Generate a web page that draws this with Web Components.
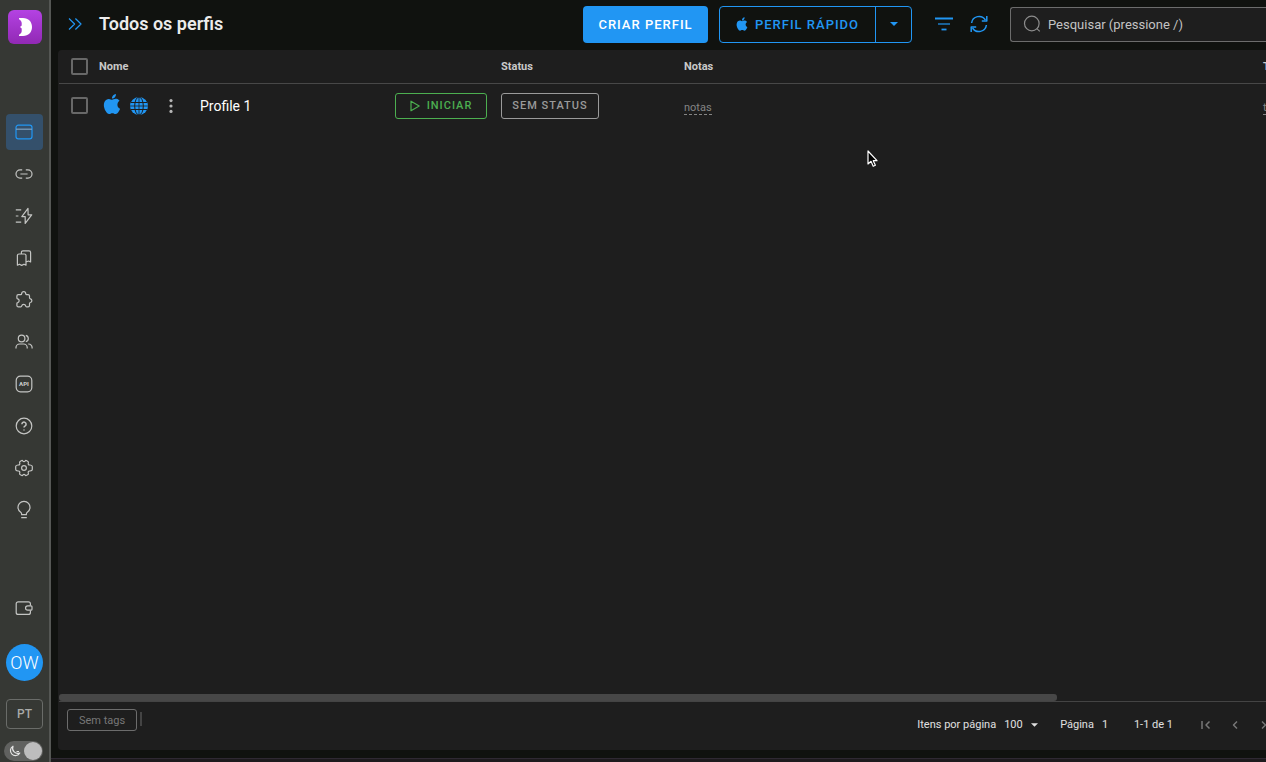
<!DOCTYPE html>
<html lang="pt">
<head>
<meta charset="utf-8">
<title>Todos os perfis</title>
<style>
  html, body { margin: 0; height: 100%; }
  body { font-family: Roboto, "Liberation Sans", sans-serif; font-size: 14px; color: #ececec; background: #10120f; overflow: hidden; }
</style>
</head>
<body>
<app-shell>
  <side-bar slot="side"></side-bar>
  <top-bar slot="top" heading="Todos os perfis"></top-bar>
  <profile-table></profile-table>
  <table-footer slot="footer"></table-footer>
</app-shell>
<mouse-pointer></mouse-pointer>

<script>
const APPLE = '<path fill="currentColor" stroke="none" d="M18.71,19.5C17.88,20.74 17,21.95 15.66,21.97C14.32,22 13.89,21.18 12.37,21.18C10.84,21.18 10.37,21.95 9.1,22C7.79,22.05 6.8,20.68 5.96,19.47C4.25,17 2.94,12.45 4.7,9.39C5.57,7.87 7.13,6.91 8.82,6.88C10.1,6.86 11.32,7.75 12.11,7.75C12.89,7.75 14.37,6.68 15.92,6.84C16.57,6.87 18.39,7.1 19.56,8.82C19.47,8.88 17.39,10.1 17.41,12.63C17.44,15.65 20.06,16.66 20.09,16.67C20.06,16.74 19.67,18.11 18.71,19.5M13,3.5C13.73,2.67 14.94,2.04 15.94,2C16.07,3.17 15.6,4.35 14.9,5.19C14.21,6.04 13.07,6.7 11.95,6.61C11.8,5.46 12.36,4.26 13,3.5Z"/>';

/* name: [viewBox, markup] */
const ICONS = {
  window: ['0 0 18 18', '<rect x="1" y="2.2" width="16" height="13.6" rx="2.4"/><path d="M1 6.2h16" stroke="#7fa3c4"/>'],
  link: ['0 0 18 18', '<path d="M7.2 4.9H5.1a4.1 4.1 0 0 0 0 8.2h2.1M10.8 4.9h2.1a4.1 4.1 0 0 1 0 8.2h-2.1M5.4 9h7.2"/>'],
  bolt: ['0 0 18 18', '<path d="M.8 2.8h5.4M.8 9h2.6M.8 15.2h5.4M13 1.4 6.8 9.6h3.4v6.8l6.5-8.6h-3.6z"/>'],
  bookmarks: ['0 0 18 18', '<path d="M2.4 6.6c0-1 .6-1.6 1.6-1.6h5.4c1 0 1.600.6 1.600 1.600v9.600l-2-1-2.300 1.200-2.300-1.200-2 1zM6.400 5V3.400c0-1 .6-1.600 1.600-1.600h6c1 0 1.600.6 1.600 1.600v9.600l-2-1-2.600 1"/>'],
  puzzle: ['0 0 18 18', '<path d="M4.200 3.700h1.600c.7 0 .8-.4.9-1a2 2 0 0 1 4 0c.1.600.2 1 .9 1h1.500c.9 0 1.400.5 1.400 1.400v1.700c0 .7.300.9.900 1a1.900 1.900 0 0 1 0 3.700c-.6.100-.9.300-.9 1v1.900c0 .9-.5 1.400-1.400 1.400h-1.500c-.7 0-.8-.3-.9-.8a2.050 2.050 0 0 0-4 0c-.1.500-.2.800-.9.800H3.300c-.9 0-1.400-.5-1.400-1.400v-1.800c0-.7.300-.9.800-1a1.900 1.900 0 0 0 0-3.700c-.5-.1-.8-.3-.8-1V5.100c0-.9.500-1.400 1.400-1.400z"/>'],
  people: ['0 0 18 18', '<circle cx="6.600" cy="5.500" r="3.300"/><path d="M1 15.400v-.8a3.600 3.600 0 0 1 3.600-3.600h4a3.600 3.600 0 0 1 3.600 3.600v.8M10.800 2.300a3.300 3.300 0 0 1 0 6.400M13.200 11h.4a3.500 3.500 0 0 1 3.500 3.600v.8"/>'],
  api: ['0 0 18 18', '<rect x="1.200" y="1.200" width="15.600" height="15.600" rx="4.200"/><text x="9" y="11" text-anchor="middle" font-size="6" font-weight="900" fill="currentColor" stroke="none">API</text>'],
  help: ['0 0 18 18', '<circle cx="9" cy="9" r="7.800"/><path d="M6.900 7.200a2.100 2.100 0 1 1 3.300 1.700c-.8.500-1.200.9-1.200 1.700M9 12.400v1" stroke-width="1.500"/>'],
  gear: ['0 0 18 18', '<circle cx="9" cy="9" r="2.400"/><path d="M6.300 1.700c.7-.4 1.300-.2 1.700.4.500.7 1.500.7 2 0 .4-.6 1-.8 1.700-.4l1.200.7c.6.400.7 1 .4 1.700-.4.900.2 1.800 1.100 1.900H15c1 .1 2.300.6 2.300 1.500v3c0 .9-1.300 1.400-2.300 1.500h-.6c-.9.100-1.500 1-1.100 1.900.3.700.2 1.300-.4 1.700l-1.200.7c-.7.400-1.300.2-1.700-.4-.5-.7-1.500-.7-2 0-.4.600-1 .8-1.700.4l-1.200-.7c-.6-.4-.7-1-.4-1.700.4-.9-.2-1.800-1.100-1.900H3c-1-.1-2.300-.6-2.300-1.500v-3C.7 6.600 2 6.100 3 6h.6c.9-.1 1.500-1 1.100-1.900-.3-.7-.2-1.300.4-1.700z"/>'],
  bulb: ['0 0 18 18', '<path d="M6.600 13.700v-.9c0-.7-.3-1-.9-1.500a6 6 0 1 1 6.600 0c-.6.500-.9.800-.9 1.500v.9zM6.200 16.600h5.600"/>'],
  wallet: ['0 0 18 18', '<path d="M15.400 6.500V4.800a2 2 0 0 0-2-2H3.200a2 2 0 0 0-2 2v8.600a2 2 0 0 0 2 2h10.200a2 2 0 0 0 2-2v-2"/><path d="M12.700 6.800H16c.6 0 1 .3 1 .9v2.500c0 .6-.4.900-1 .9h-3.300a2.150 2.150 0 0 1 0-4.300z"/>'],
  apple: ['3 2 18 20', APPLE],
  chevrons: ['0 0 14 14', '<path d="M1 1.500 6.600 7 1 12.500M7.400 1.500 13 7l-5.600 5.500"/>'],
  filter: ['0 0 18 16', '<path d="M0 2.500h18" stroke-width="2"/><path d="M3 8h12" stroke-width="1.200"/><path d="M6.500 13.500h5" stroke-width="1.800"/>'],
  refresh: ['0 0 18 18', '<path d="M1.600 8A7.500 7.500 0 0 1 15.400 5M16.400 10A7.500 7.500 0 0 1 2.600 13" stroke-width="1.500"/><path d="M16.800 1v5h-5M1.200 17v-5h5" stroke-width="1.500"/>'],
  search: ['0 0 18 18', '<circle cx="8.800" cy="8.500" r="7.300"/><path d="m13.800 13.600 3 2.800"/>'],
  caret: ['0 0 8 4', '<path d="M0 0h8L4 4z" fill="currentColor" stroke="none"/>'],
  globe: ['0 0 18 18', '<circle cx="9" cy="9" r="9" fill="currentColor" stroke="none"/><g stroke="#1e1e1e" stroke-width="1"><ellipse cx="9" cy="9" rx="4.300" ry="9"/><path d="M1 5.500h16M1 12.500h16"/></g><path d="M9 0v18M0 9h18" stroke="#1e1e1e" stroke-width=".8"/>'],
  dots: ['0 0 4 14', '<g fill="currentColor" stroke="none"><circle cx="2" cy="1.600" r="1.600"/><circle cx="2" cy="7" r="1.600"/><circle cx="2" cy="12.400" r="1.600"/></g>'],
  play: ['0 0 10 12', '<path d="M1 1.200 9.200 6 1 10.800z"/>'],
  first: ['0 0 10 10', '<path d="M1 1v8M8.500 1.500 5 5l3.500 3.500" stroke-width="1.500"/>'],
  prev: ['0 0 6 10', '<path d="M5 1.500 1.500 5 5 8.500" stroke-width="1.500"/>'],
  next: ['0 0 6 10', '<path d="M1 1.500 4.500 5 1 8.500" stroke-width="1.500"/>'],
  moon: ['0 0 12 12', '<path d="M4 1.200A5 5 0 1 0 10.800 8 5.200 5.200 0 0 1 4 1.200zM7.500 6.500h2.500"/>']
};

function define(name, html, setup) {
  const template = document.createElement('template');
  template.innerHTML = html;
  customElements.define(name, class extends HTMLElement {
    connectedCallback() {
      if (this.shadowRoot) return;
      const root = this.attachShadow({ mode: 'open' });
      root.append(template.content.cloneNode(true));
      if (setup) setup(this, root);
    }
  });
}

define('ui-icon', `<style>
  :host { display: inline-flex; flex: none; width: 18px; height: 18px; }
  svg { width: 100%; height: 100%; fill: none; stroke: currentColor; stroke-width: 1.2; stroke-linejoin: round; overflow: visible; }
</style>`, (host, root) => {
  const [box, body] = ICONS[host.getAttribute('name')];
  root.innerHTML += `<svg viewBox="${box}" aria-hidden="true">${body}</svg>`;
});

define('app-shell', `<style>
  :host { display: flex; height: 100vh; }
  .main { flex: 1; min-width: 0; display: flex; flex-direction: column; overflow: hidden; }
  .panel { flex: 1; min-height: 0; display: flex; flex-direction: column; margin-left: 7px; background: #1e1e1e; border-radius: 4px 0 0 4px; }
  .body { flex: 1; min-height: 0; overflow: hidden; margin-left: 1px; }
  .edge { height: 3px; margin-top: 8px; background: #1d1a1d; border-top: 1px solid #2f2933; }
</style>
<slot name="side"></slot>
<div class="main">
  <slot name="top"></slot>
  <div class="panel"><div class="body"><slot></slot></div><slot name="footer"></slot></div>
  <div class="edge"></div>
</div>`);

define('side-item', `<style>
  :host { display: block; }
  a { display: flex; align-items: center; justify-content: center; box-sizing: border-box; height: 36px; padding-right: 1px; border-radius: 4px; color: #c4c5c3; }
  :host([active]) a { background: #34506b; color: #2196f3; }
</style><a href="#"></a>`, (host, root) => {
  const a = root.querySelector('a');
  a.setAttribute('aria-label', host.getAttribute('label'));
  a.innerHTML = `<ui-icon name="${host.getAttribute('icon')}"></ui-icon>`;
});

define('side-bar', `<style>
  :host { display: flex; flex-direction: column; flex: none; width: 51px; box-sizing: border-box; padding: 10px 6px 1px; background: #363834; border-right: 2px solid #555754; }
  .logo { display: block; width: 34px; height: 34px; margin: 0 auto 70px 2px; }
  nav { display: flex; flex-direction: column; gap: 6px; }
  .bottom { margin-top: auto; display: flex; flex-direction: column; }
  .avatar { height: 37px; margin-top: 18px; padding: 0; border: 0; border-radius: 50%; background: #2196f3; color: #fff; font: 300 18px Roboto, sans-serif; }
  .lang { height: 30px; margin-top: 18px; padding: 0; border: 1px solid #6a6c69; border-radius: 4px; background: none; color: #a9aaa8; font: 500 12px Roboto, sans-serif; }
  .theme { display: flex; align-items: center; margin: 12px 0 0 -2px; height: 20px; border-radius: 10px; background: #60615f; color: #e4e4e4; }
  .theme ui-icon { width: 12px; height: 12px; margin-left: 5px; }
  .theme input { appearance: none; width: 18px; height: 18px; margin: 0 1px 0 auto; border-radius: 50%; background: #bdbdbd; }
</style>
<svg class="logo" viewBox="0 0 34 34" role="img" aria-label="Logo">
  <defs><linearGradient id="g" x2="0" y2="1"><stop stop-color="#b442e3"/><stop offset="1" stop-color="#9129b4"/></linearGradient></defs>
  <rect width="34" height="34" rx="6" fill="url(#g)"/>
  <path fill="#fff" d="M11 8h4c5.500 0 9 3.800 9 9s-3.500 9-9 9h-4v-1.200c1.700-1 2.700-2.200 2.700-3.800v-2.500L12 17l1.700-1.500V13c0-1.600-1-2.800-2.700-3.800z"/>
</svg>
<nav>
  <side-item active icon="window" label="Perfis"></side-item>
  <side-item icon="link" label="Proxies"></side-item>
  <side-item icon="bolt" label="Automação"></side-item>
  <side-item icon="bookmarks" label="Favoritos"></side-item>
  <side-item icon="puzzle" label="Extensões"></side-item>
  <side-item icon="people" label="Equipe"></side-item>
  <side-item icon="api" label="API"></side-item>
  <side-item icon="help" label="Ajuda"></side-item>
  <side-item icon="gear" label="Configurações"></side-item>
  <side-item icon="bulb" label="Ideias"></side-item>
</nav>
<div class="bottom">
  <side-item icon="wallet" label="Carteira"></side-item>
  <button class="avatar">OW</button>
  <button class="lang">PT</button>
  <label class="theme"><ui-icon name="moon"></ui-icon><input type="checkbox" checked aria-label="Tema escuro"></label>
</div>`);

define('top-bar', `<style>
  :host { display: flex; flex: none; align-items: center; box-sizing: border-box; height: 50px; padding: 0 0 2px 17px; }
  button { display: flex; align-items: center; justify-content: center; padding: 0; border: 0; background: none; color: #2196f3; font: 500 13px Roboto, sans-serif; letter-spacing: 1px; }
  .expand ui-icon { width: 14px; height: 14px; }
  h1 { margin: 0 auto 0 17px; font-size: 18px; font-weight: 600; line-height: 24px; white-space: nowrap; }
  .create { width: 125px; height: 37px; border-radius: 4px; background: #2196f3; color: #fff; }
  .split { display: flex; box-sizing: border-box; width: 193px; height: 37px; margin: 0 23px 0 11px; border: 1px solid #2196f3; border-radius: 4px; }
  .quick { flex: 1; gap: 7px; }
  .quick ui-icon { width: 12px; height: 14px; }
  .more { width: 36px; border-left: 1px solid #2196f3; }
  .more ui-icon { width: 8px; height: 4px; }
  .tool { margin-right: 17px; }
  .tool + .tool { margin-right: 22px; }
  .search { display: flex; align-items: center; flex: 0 0 256px; box-sizing: border-box; height: 35px; border: 1px solid #6c6c6c; border-right: 0; border-radius: 3px 0 0 3px; background: #1e1e1e; color: #8c8c8c; padding-left: 12px; gap: 7px; }
  input { flex: 1; min-width: 0; padding: 0; border: 0; outline: 0; background: none; color: #ccc; font: 13px Roboto, sans-serif; }
  input::placeholder { color: #c3c3c3; }
</style>
<button class="expand" aria-label="Expandir"><ui-icon name="chevrons"></ui-icon></button>
<h1></h1>
<button class="create">CRIAR PERFIL</button>
<div class="split">
  <button class="quick"><ui-icon name="apple"></ui-icon>PERFIL RÁPIDO</button>
  <button class="more" aria-label="Mais opções"><ui-icon name="caret"></ui-icon></button>
</div>
<button class="tool" aria-label="Filtrar"><ui-icon name="filter"></ui-icon></button>
<button class="tool" aria-label="Atualizar"><ui-icon name="refresh"></ui-icon></button>
<label class="search"><ui-icon name="search"></ui-icon><input type="search" placeholder="Pesquisar (pressione /)"></label>`, (host, root) => {
  root.querySelector('h1').textContent = host.getAttribute('heading');
});

define('profile-table', `<style>
  :host { display: block; }
  table { table-layout: fixed; border-collapse: separate; border-spacing: 0; width: 1289px; }
  .c-check { width: 40px; } .c-name { width: 387px; } .c-status { width: 183px; } .c-notes { width: 579px; }
  th, td { padding: 0 0 0 15px; text-align: left; }
  th { height: 33px; border-bottom: 1px solid #484848; color: #c9c9c9; font-size: 11px; font-weight: 700; }
  td { height: 43px; }
  th:first-child, td:first-child { padding-left: 12px; }
  th:nth-child(2), td:nth-child(2) { padding-left: 0; }
  input { display: block; appearance: none; box-sizing: border-box; width: 17px; height: 17px; margin: 0; border: 2px solid #686868; border-radius: 2px; }
  .name { display: flex; align-items: center; padding-left: 4px; margin-right: -1px; color: #fff; font-size: 14px; }
  .name ui-icon { color: #2196f3; }
  .name .apple { width: 18px; height: 20px; margin: 0 9px 3px 0; }
  button { display: flex; align-items: center; justify-content: center; height: 26px; box-sizing: border-box; padding: 0; background: none; font: 500 11px Roboto, sans-serif; letter-spacing: 1px; border-radius: 3px; }
  .menu { width: 14px; margin: 0 22px 0 16px; border: 0; }
  .name .menu ui-icon { width: 4px; height: 14px; color: #b5b5b5; }
  .start { width: 92px; margin-left: auto; gap: 7px; border: 1px solid #4caf50; color: #4caf50; }
  .name .start ui-icon { width: 10px; height: 12px; color: inherit; }
  .status { width: 98px; border: 1px solid #9a9a9a; color: #9a9a9a; }
  td a { color: #858585; font-size: 11px; line-height: 13px; text-decoration: none; border-bottom: 1px dashed #858585; display: inline-block; margin-top: 4px; }
</style>
<table>
  <colgroup><col class="c-check"><col class="c-name"><col class="c-status"><col class="c-notes"><col></colgroup>
  <thead><tr><th><input type="checkbox" aria-label="Selecionar todos"></th><th>Nome</th><th>Status</th><th>Notas</th><th>Tags</th></tr></thead>
  <tbody><tr>
    <td><input type="checkbox" aria-label="Selecionar Profile 1"></td>
    <td><div class="name"><ui-icon class="apple" name="apple"></ui-icon><ui-icon name="globe"></ui-icon>
      <button class="menu" aria-label="Ações"><ui-icon name="dots"></ui-icon></button>Profile 1
      <button class="start"><ui-icon name="play"></ui-icon>INICIAR</button></div></td>
    <td><button class="status">SEM STATUS</button></td>
    <td><a href="#">notas</a></td>
    <td><a href="#">tags</a></td>
  </tr></tbody>
</table>`);

define('table-footer', `<style>
  :host { display: block; flex: none; font-size: 11px; color: #e0e0e0; }
  .track { margin-left: 1px; height: 7px; border-bottom: 1px solid #444; }
  .thumb { width: 998px; max-width: 100%; height: 7px; border-radius: 3px; background: #474747; }
  .row { display: flex; height: 48px; padding-left: 9px; overflow: hidden; }
  .tags { box-sizing: border-box; width: 70px; height: 22px; margin-top: 7px; padding: 0; border: 1px solid #6c6c6c; border-radius: 3px; background: none; color: #777; font: 11px Roboto, sans-serif; }
  .sep { width: 2px; height: 14px; margin: 10px auto 0 3px; background: #444; }
  .pager { display: flex; align-items: center; margin-right: -3px; padding-bottom: 3px; white-space: nowrap; }
  label { display: flex; align-items: center; gap: 8px; }
  select, input { appearance: none; border: 0; padding: 0; margin: 0; background: none; color: inherit; font: 11px Roboto, sans-serif; }
  select { width: 19px; }
  input { width: 8px; }
  .size ui-icon { width: 7px; height: 4px; }
  .page { margin: 0 24px 0 22px; }
  .pager button { display: flex; justify-content: center; width: 10px; margin-left: 19px; padding: 0; border: 0; background: none; color: #777; }
  .pager .first { margin-left: 28px; }
  .pager button ui-icon { width: 6px; height: 10px; }
  .pager .first ui-icon { width: 10px; }
</style>
<div class="track"><div class="thumb"></div></div>
<div class="row">
  <button class="tags">Sem tags</button><span class="sep"></span>
  <div class="pager">
    <label class="size">Itens por página <select><option>100</option></select><ui-icon name="caret"></ui-icon></label>
    <label class="page">Página <input value="1"></label>
    <span>1-1 de 1</span>
    <button class="first" aria-label="Primeira"><ui-icon name="first"></ui-icon></button>
    <button aria-label="Anterior"><ui-icon name="prev"></ui-icon></button>
    <button aria-label="Próxima"><ui-icon name="next"></ui-icon></button>
  </div>
</div>`);

define('mouse-pointer', `<style>
  :host { position: absolute; left: 867px; top: 150px; width: 11px; height: 18px; pointer-events: none; }
  svg { display: block; }
</style>
<svg width="11" height="18" viewBox="0 0 11 18"><path d="M1 1v13l3-2.700 2.200 5 2.200-1-2.200-4.600H10z" fill="#000" stroke="#fff" stroke-width="1.200" stroke-linejoin="round"/></svg>`);
</script>
</body>
</html>
